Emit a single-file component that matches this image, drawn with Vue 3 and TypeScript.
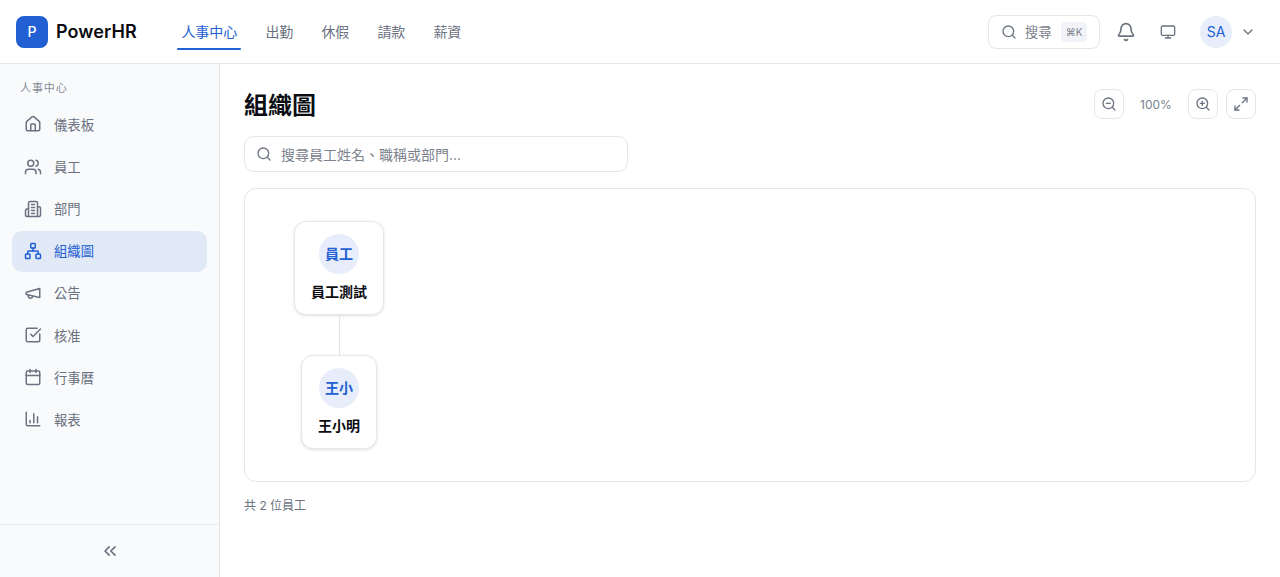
<script setup lang="ts">
type IconShape = { tag: 'path' | 'circle' | 'rect'; attrs: Record<string, string | number> }
const p = (d: string): IconShape => ({ tag: 'path', attrs: { d } })
const c = (cx: number, cy: number, r: number): IconShape => ({ tag: 'circle', attrs: { cx, cy, r } })
const r = (x: number, y: number, width: number, height: number, rx: number): IconShape => ({ tag: 'rect', attrs: { x, y, width, height, rx } })

const icons: Record<string, IconShape[]> = {
  search: [c(11, 11, 8), p('m21 21-4.3-4.3')],
  bell: [p('M10.268 21a2 2 0 0 0 3.464 0'), p('M3.262 15.326A1 1 0 0 0 4 17h16a1 1 0 0 0 .74-1.673C19.41 13.956 18 12.499 18 8A6 6 0 0 0 6 8c0 4.499-1.411 5.956-2.738 7.326')],
  monitor: [r(2, 3, 20, 14, 2), p('M8 21h8'), p('M12 17v4')],
  chevronDown: [p('m6 9 6 6 6-6')],
  home: [p('M15 21v-8a1 1 0 0 0-1-1h-4a1 1 0 0 0-1 1v8'), p('M3 10a2 2 0 0 1 .709-1.528l7-5.999a2 2 0 0 1 2.582 0l7 5.999A2 2 0 0 1 21 10v9a2 2 0 0 1-2 2H5a2 2 0 0 1-2-2z')],
  users: [p('M16 21v-2a4 4 0 0 0-4-4H6a4 4 0 0 0-4 4v2'), c(9, 7, 4), p('M22 21v-2a4 4 0 0 0-3-3.87'), p('M16 3.13a4 4 0 0 1 0 7.75')],
  building: [p('M6 22V4a2 2 0 0 1 2-2h8a2 2 0 0 1 2 2v18Z'), p('M6 12H4a2 2 0 0 0-2 2v6a2 2 0 0 0 2 2h2'), p('M18 9h2a2 2 0 0 1 2 2v9a2 2 0 0 1-2 2h-2'), p('M10 6h4'), p('M10 10h4'), p('M10 14h4'), p('M10 18h4')],
  network: [r(16, 16, 6, 6, 1), r(2, 16, 6, 6, 1), r(9, 2, 6, 6, 1), p('M5 16v-3a1 1 0 0 1 1-1h12a1 1 0 0 1 1 1v3'), p('M12 12V8')],
  megaphone: [p('m3 11 18-5v12L3 14v-3z'), p('M11.6 16.8a3 3 0 1 1-5.8-1.6')],
  check: [p('M21 10.5V19a2 2 0 0 1-2 2H5a2 2 0 0 1-2-2V5a2 2 0 0 1 2-2h12.5'), p('m9 11 3 3L22 4')],
  calendar: [p('M8 2v4'), p('M16 2v4'), r(3, 4, 18, 18, 2), p('M3 10h18')],
  chart: [p('M3 3v16a2 2 0 0 0 2 2h16'), p('M18 17V9'), p('M13 17V5'), p('M8 17v-3')],
  chevronsLeft: [p('m11 17-5-5 5-5'), p('m18 17-5-5 5-5')],
  zoomOut: [c(11, 11, 8), p('m21 21-4.35-4.35'), p('M8 11h6')],
  zoomIn: [c(11, 11, 8), p('m21 21-4.35-4.35'), p('M11 8v6'), p('M8 11h6')],
  maximize: [p('M15 3h6v6'), p('m21 3-7 7'), p('m3 21 7-7'), p('M9 21H3v-6')],
}

const topNav = ['人事中心', '出勤', '休假', '請款', '薪資']
const sideNav = [
  { label: '儀表板', icon: 'home' },
  { label: '員工', icon: 'users' },
  { label: '部門', icon: 'building' },
  { label: '組織圖', icon: 'network', active: true },
  { label: '公告', icon: 'megaphone' },
  { label: '核准', icon: 'check' },
  { label: '行事曆', icon: 'calendar' },
  { label: '報表', icon: 'chart' },
]
</script>

<template>
  <div class="app">
    <header class="topbar">
      <div class="brand">
        <div class="logo">P</div>
        <span class="brand-name">PowerHR</span>
      </div>
      <nav class="top-nav">
        <a v-for="(item, i) in topNav" :key="item" class="top-link" :class="{ current: i === 0 }">{{ item }}</a>
      </nav>
      <div class="top-actions">
        <div class="global-search">
          <svg class="ico i16" viewBox="0 0 24 24"><component :is="s.tag" v-for="(s, i) in icons.search" :key="i" v-bind="s.attrs" /></svg>
          <span class="gs-text">搜尋</span>
          <kbd class="kbd">⌘K</kbd>
        </div>
        <svg class="ico i20 bell" viewBox="0 0 24 24"><component :is="s.tag" v-for="(s, i) in icons.bell" :key="i" v-bind="s.attrs" /></svg>
        <svg class="ico i16 monitor" viewBox="0 0 24 24"><component :is="s.tag" v-for="(s, i) in icons.monitor" :key="i" v-bind="s.attrs" /></svg>
        <div class="user">
          <div class="user-avatar">SA</div>
          <svg class="ico i16" viewBox="0 0 24 24"><component :is="s.tag" v-for="(s, i) in icons.chevronDown" :key="i" v-bind="s.attrs" /></svg>
        </div>
      </div>
    </header>

    <div class="body">
      <aside class="sidebar">
        <div class="side-top">
          <div class="side-label">人事中心</div>
          <a v-for="item in sideNav" :key="item.label" class="side-link" :class="{ active: item.active }">
            <svg class="ico i18" viewBox="0 0 24 24"><component :is="s.tag" v-for="(s, i) in icons[item.icon]" :key="i" v-bind="s.attrs" /></svg>
            <span>{{ item.label }}</span>
          </a>
        </div>
        <div class="side-bottom">
          <svg class="ico i20" viewBox="0 0 24 24"><component :is="s.tag" v-for="(s, i) in icons.chevronsLeft" :key="i" v-bind="s.attrs" /></svg>
        </div>
      </aside>

      <main class="main">
        <div class="page-head">
          <h1 class="title">組織圖</h1>
          <div class="zoom-tools">
            <button class="tool"><svg class="ico i16" viewBox="0 0 24 24"><component :is="s.tag" v-for="(s, i) in icons.zoomOut" :key="i" v-bind="s.attrs" /></svg></button>
            <span class="zoom-val">100%</span>
            <button class="tool"><svg class="ico i16" viewBox="0 0 24 24"><component :is="s.tag" v-for="(s, i) in icons.zoomIn" :key="i" v-bind="s.attrs" /></svg></button>
            <button class="tool"><svg class="ico i16" viewBox="0 0 24 24"><component :is="s.tag" v-for="(s, i) in icons.maximize" :key="i" v-bind="s.attrs" /></svg></button>
          </div>
        </div>

        <div class="people-search">
          <svg class="ico i16" viewBox="0 0 24 24"><component :is="s.tag" v-for="(s, i) in icons.search" :key="i" v-bind="s.attrs" /></svg>
          <span>搜尋員工姓名、職稱或部門...</span>
        </div>

        <section class="canvas">
          <div class="tree">
            <div class="node">
              <div class="node-avatar">員工</div>
              <div class="node-name">員工測試</div>
            </div>
            <div class="link"></div>
            <div class="node">
              <div class="node-avatar">王小</div>
              <div class="node-name">王小明</div>
            </div>
          </div>
        </section>

        <p class="count">共 2 位員工</p>
      </main>
    </div>
  </div>
</template>

<style>
html, body { margin: 0; background: #fff; overflow: hidden; }
</style>

<style scoped>
.app {
  height: 577px;
  display: flex;
  flex-direction: column;
  font-family: Inter, "Noto Sans CJK TC", sans-serif;
  color: #0b0d12;
}
.ico {
  fill: none;
  stroke: currentColor;
  stroke-width: 2;
  stroke-linecap: round;
  stroke-linejoin: round;
  flex: none;
  display: block;
}
.i16 { width: 16px; height: 16px; }
.i18 { width: 18px; height: 18px; }
.i20 { width: 20px; height: 20px; }

.topbar {
  height: 64px;
  box-sizing: border-box;
  border-bottom: 1px solid #e5e7eb;
  display: flex;
  align-items: center;
  padding: 0 24px 0 16px;
  flex: none;
}
.brand { display: flex; align-items: center; gap: 8px; }
.logo {
  width: 32px;
  height: 32px;
  border-radius: 8px;
  background: #2160d3;
  color: #fff;
  font-size: 14px;
  font-weight: 500;
  display: flex;
  align-items: center;
  justify-content: center;
}
.brand-name { font-size: 18px; font-weight: 600; letter-spacing: 0.005em; }
.top-nav { display: flex; gap: 20px; margin-left: 40px; align-self: flex-start; margin-top: 16px; }
.top-link {
  position: relative;
  padding: 0 3.5px 0 4.5px;
  height: 34px;
  line-height: 32px;
  font-size: 14px;
  color: #6b7280;
  font-weight: 400;
}
.top-link.current { color: #2160d3; }
.top-link.current::after {
  content: "";
  position: absolute;
  left: 0;
  right: 0;
  bottom: 0;
  height: 2px;
  background: #2160d3;
  border-radius: 1px;
}
.top-actions { margin-left: auto; display: flex; align-items: center; color: #6b7280; }
.global-search {
  width: 112px;
  height: 34px;
  box-sizing: border-box;
  border: 1px solid #e5e7eb;
  border-radius: 8px;
  display: flex;
  align-items: center;
  padding: 0 12px;
  gap: 8px;
}
.gs-text { font-size: 13.33px; color: #7c828e; }
.kbd {
  margin-left: auto;
  font-family: inherit;
  font-size: 10px;
  height: 20px;
  width: 26px;
  line-height: 20px;
  text-align: center;
  background: #f1f3f8;
  border-radius: 4px;
  color: #7c828e;
}
.bell { margin-left: 16px; }
.monitor { margin-left: 24px; }
.user { display: flex; align-items: center; gap: 8px; margin-left: 24px; }
.user-avatar {
  width: 32px;
  height: 32px;
  border-radius: 50%;
  background: #e7edfa;
  color: #2160d3;
  font-size: 14px;
  font-weight: 400;
  display: flex;
  align-items: center;
  justify-content: center;
}

.body { flex: 1; display: flex; min-height: 0; }
.sidebar {
  width: 220px;
  box-sizing: border-box;
  background: #f9fafc;
  border-right: 1px solid #e5e7eb;
  display: flex;
  flex-direction: column;
  flex: none;
}
.side-top { flex: 1; padding: 16px 12px 0; display: flex; flex-direction: column; gap: 1.45px; }
.side-label { font-size: 11px; line-height: 16px; color: #868c98; padding: 0 8px; margin-bottom: 7.35px; letter-spacing: 0.88px; }
.side-link {
  height: 40.7px;
  box-sizing: border-box;
  padding: 0 12px 1.45px;
  border-radius: 10px;
  display: flex;
  align-items: center;
  gap: 12px;
  font-size: 13.33px;
  color: #6b7280;
  font-weight: 400;
}
.side-link.active { background: #e2e9f6; color: #2160d3; }
.side-bottom {
  height: 53px;
  box-sizing: border-box;
  flex: none;
  border-top: 1px solid #e5e7eb;
  display: flex;
  align-items: center;
  justify-content: center;
  color: #6b7280;
}

.main { flex: 1; min-width: 0; padding: 24px; box-sizing: border-box; display: flex; flex-direction: column; }
.page-head { display: flex; align-items: center; justify-content: space-between; height: 36px; }
.title { margin: 0; font-size: 24px; font-weight: 700; line-height: 36px; }
.zoom-tools { display: flex; align-items: center; margin-top: -4px; }
.tool {
  width: 30px;
  height: 30px;
  padding: 0;
  border: 1px solid #e5e7eb;
  border-radius: 8px;
  background: #fff;
  color: #6b7280;
  display: flex;
  align-items: center;
  justify-content: center;
}
.tool + .tool { margin-left: 8px; }
.zoom-val { width: 64px; text-align: center; font-size: 12px; color: #7c828e; }
.people-search {
  margin-top: 12px;
  width: 384px;
  height: 36px;
  box-sizing: border-box;
  border: 1px solid #e5e7eb;
  border-radius: 10px;
  display: flex;
  align-items: center;
  gap: 9px;
  padding: 0 11px;
  font-size: 14px;
  color: #7c828e;
  flex: none;
}
.people-search .ico { color: #6b7280; }
.canvas {
  margin-top: 16px;
  height: 294px;
  box-sizing: border-box;
  border: 1px solid #e5e7eb;
  border-radius: 12px;
  padding: 32px 49px;
  flex: none;
}
.tree { display: inline-flex; flex-direction: column; align-items: center; }
.node {
  box-sizing: border-box;
  height: 94px;
  padding: 12px 16px;
  background: #fff;
  border: 1px solid #e5e7eb;
  border-radius: 12px;
  box-shadow: 0 1px 3px rgba(0, 0, 0, 0.12);
  display: flex;
  flex-direction: column;
  align-items: center;
  gap: 8px;
}
.node-avatar {
  width: 40px;
  height: 40px;
  box-sizing: border-box;
  padding-bottom: 2px;
  border-radius: 50%;
  background: #e7edfa;
  color: #2160d3;
  font-size: 14px;
  font-weight: 600;
  display: flex;
  align-items: center;
  justify-content: center;
}
.node-name { font-size: 14px; font-weight: 600; line-height: 20px; color: #0b0d12; white-space: nowrap; }
.link { width: 1px; height: 40px; background: #dfe2e7; }
.count { margin: 15px 0 0; font-size: 12px; line-height: 18px; color: #6b7280; }
</style>
